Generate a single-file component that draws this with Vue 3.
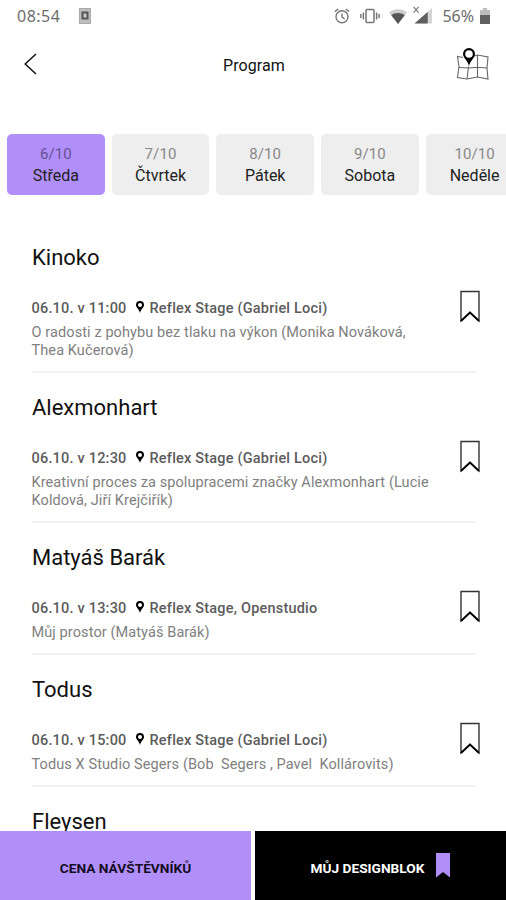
<template>
  <div class="screen">
    <div class="status-bar">
      <span class="time">08:54</span>
      <svg class="notif" width="12" height="16" viewBox="0 0 12 16">
        <rect x="0.5" y="0.5" width="11" height="15" fill="#bdbdbd" stroke="#aaa" />
        <rect x="3.5" y="4.5" width="5" height="6" fill="#ccc" stroke="#555" stroke-width="2" />
      </svg>
      <div class="status-right">
        <svg width="16" height="16" viewBox="0 0 16 16" fill="none" stroke="#777" stroke-width="1.4">
          <circle cx="8" cy="8.8" r="6" />
          <path d="M1 3.6 4.2 1M15 3.6 11.8 1M8 5.4V9l2.6 1.8" />
        </svg>
        <svg class="vibrate" width="20" height="16" viewBox="0 0 20 16" fill="none" stroke="#777" stroke-width="1.5">
          <rect x="6" y="1.5" width="8" height="13" rx="1" />
          <path d="M3.4 4.5v7M16.6 4.5v7M.9 6v4M19.1 6v4" />
        </svg>
        <svg class="wifi" width="18" height="15" viewBox="0 0 18 15">
          <path d="M0 3.5C5-.8 13-.8 18 3.5L9 15Z" fill="#ccc" />
          <path d="M2.3 6.2C6 3.3 12 3.3 15.7 6.2L9 15Z" fill="#555" />
        </svg>
        <svg class="signal" width="20" height="18" viewBox="0 0 20 18">
          <path d="M1.5 17.5 19 2v15.5Z" fill="#d5d5d5" />
          <path d="M1.5 17.5 14.7 6v11.5Z" fill="#606060" />
          <path d="M.6.8 5.6 6.6M5.6.8.6 6.6" stroke="#777" stroke-width="1.1" />
        </svg>
        <span class="percent">56%</span>
        <svg class="battery" width="10" height="16" viewBox="0 0 10 16">
          <path d="M0 2h3V0h4v2h3v5H0Z" fill="#bbb" />
          <path d="M0 7h10v9H0Z" fill="#606060" />
        </svg>
      </div>
    </div>

    <header class="header">
      <svg class="back" width="14" height="22" viewBox="0 0 14 22">
        <path d="M12 1 1.2 11 12 21" fill="none" stroke="#111" stroke-width="1.5" />
      </svg>
      <h1>Program</h1>
      <svg class="map" width="34" height="33" viewBox="0 0 34 33">
        <g fill="none" stroke="#666" stroke-width="1.1">
          <path d="M7 9.5 1.5 8.5l1.5 10-1.5 11 9.5 1.5 10.5-2 10.5 2-1-10.5 1-11.5L21.5 7l-4 1.2" />
          <path d="M21.5 7V29M12.5 18.5 11 31M3 19.5l9.5.5 9-.8 9.5.8" />
        </g>
        <path d="M13 0a6 6 0 0 0-6 6c0 3.6 4.6 6.5 6 12 1.4-5.5 6-8.4 6-12a6 6 0 0 0-6-6Z" fill="#000" />
        <circle cx="13" cy="6" r="3.8" fill="#fff" />
      </svg>
    </header>

    <nav class="days">
      <button v-for="(day, i) in days" :key="day.date" class="day" :class="{ active: i === activeDay }" @click="activeDay = i">
        <span class="day-date">{{ day.date }}</span>
        <span class="day-name">{{ day.name }}</span>
      </button>
    </nav>

    <main class="list">
      <article v-for="item in program" :key="item.title" class="item">
        <h2>{{ item.title }}</h2>
        <template v-if="item.when">
          <div class="meta">
            <span class="when">{{ item.when }}</span>
            <svg class="pin" width="8" height="12" viewBox="0 0 8 12">
              <path d="M4 0a4 4 0 0 0-4 4c0 2.5 3 4 4 8 1-4 4-5.5 4-8a4 4 0 0 0-4-4Z" fill="#000" />
              <circle cx="4" cy="4" r="2" fill="#fff" />
            </svg>
            <span>{{ item.place }}</span>
          </div>
          <p>
            <span v-for="line in item.text" :key="line">{{ line }}</span>
          </p>
          <svg class="bookmark" width="20" height="33" viewBox="0 0 20 33">
            <path d="M1 1.5H19V31L10 22.5 1 31Z" fill="none" stroke="#333" stroke-width="1.4" />
            <path d="M1 31 10 22.5 19 31" fill="none" stroke="#000" stroke-width="1.8" />
          </svg>
        </template>
      </article>
    </main>

    <footer class="footer">
      <button class="price">CENA NÁVŠTĚVNÍKŮ</button>
      <button class="mine">
        <span>MŮJ DESIGNBLOK</span>
        <svg width="14" height="25" viewBox="0 0 14 25">
          <path d="M0 0h14v24.5l-7-5.5-7 5.5Z" fill="#b18ffb" />
        </svg>
      </button>
    </footer>
  </div>
</template>

<script setup>
import { ref } from 'vue';

const activeDay = ref(0);

const days = [
  { date: '6/10', name: 'Středa' },
  { date: '7/10', name: 'Čtvrtek' },
  { date: '8/10', name: 'Pátek' },
  { date: '9/10', name: 'Sobota' },
  { date: '10/10', name: 'Neděle' }
];

const program = [
  {
    title: 'Kinoko',
    when: '06.10. v 11:00',
    place: 'Reflex Stage (Gabriel Loci)',
    text: ['O radosti z pohybu bez tlaku na výkon (Monika Nováková,', 'Thea Kučerová)']
  },
  {
    title: 'Alexmonhart',
    when: '06.10. v 12:30',
    place: 'Reflex Stage (Gabriel Loci)',
    text: ['Kreativní proces za spolupracemi značky Alexmonhart (Lucie', 'Koldová, Jiří Krejčiřík)']
  },
  {
    title: 'Matyáš Barák',
    when: '06.10. v 13:30',
    place: 'Reflex Stage, Openstudio',
    text: ['Můj prostor (Matyáš Barák)']
  },
  {
    title: 'Todus',
    when: '06.10. v 15:00',
    place: 'Reflex Stage (Gabriel Loci)',
    text: ['Todus X Studio Segers (Bob  Segers , Pavel  Kollárovits)']
  },
  { title: 'Fleysen' }
];
</script>

<style>
body {
  margin: 0;
  background: #fff;
}
</style>

<style scoped>
.screen {
  display: flex;
  flex-direction: column;
  height: 900px;
  overflow: hidden;
  background: #fff;
  color: #111;
  font-family: Roboto, 'Liberation Sans', sans-serif;
}
button {
  border: none;
  padding: 0;
  font-family: inherit;
}
h1,
h2,
p {
  margin: 0;
  font-weight: 400;
}
svg {
  flex: none;
}

/* Status bar */
.status-bar {
  display: flex;
  align-items: center;
  height: 32px;
  padding: 0 16px 0 17px;
  box-sizing: border-box;
  font-family: 'Noto Sans', sans-serif;
  font-size: 16px;
  color: #6c6c6c;
}
.time {
  letter-spacing: 0.5px;
}
.notif {
  margin: -1px 0 0 19px;
}
.status-right {
  display: flex;
  align-items: center;
  margin-left: auto;
}
.vibrate {
  margin-left: 10px;
}
.wifi {
  margin-left: 9px;
}
.signal {
  margin: -3px 0 0 6px;
}
.percent {
  margin-left: 9px;
}
.battery {
  margin-left: 6px;
}

/* Header */
.header {
  display: flex;
  align-items: center;
  justify-content: space-between;
  height: 66px;
  padding: 0 16px 0 24px;
}
.back {
  margin-bottom: 2px;
}
.map {
  margin-bottom: 1px;
}
.header h1 {
  margin-left: 14px;
  font-size: 16px;
  letter-spacing: 0.1px;
}

/* Days */
.days {
  display: flex;
  gap: 7px;
  margin: 36px 0 0 7px;
}
.day {
  display: flex;
  flex-direction: column;
  flex: none;
  align-items: center;
  width: 97.7px;
  height: 61px;
  padding-top: 10px;
  box-sizing: border-box;
  border-radius: 5px;
  background: #eee;
  font-size: 16px;
  line-height: 21px;
}
.day-date {
  color: #888;
  font-size: 15px;
  letter-spacing: 0.1px;
}
.day-name {
  color: #222;
}
.day.active {
  background: #b18ffb;
}
.active .day-date {
  color: #68518f;
}

/* Program list */
.list {
  flex: 1;
  min-height: 0;
  overflow: hidden;
  padding: 28px 30px 0 32px;
}
.item {
  position: relative;
  padding: 20px 0 11px;
  border-bottom: 2px solid #f1f1f1;
}
.item:last-child {
  border-bottom: none;
  padding-bottom: 0;
}
.item h2 {
  font-size: 22px;
  line-height: 30px;
}
.meta {
  display: flex;
  align-items: center;
  height: 20px;
  margin: 25px 0 0 -0.5px;
  color: #5c5c5c;
  font-size: 14.5px;
  font-weight: 500;
  letter-spacing: 0.2px;
}
.pin {
  margin: -2px 6px 0 9px;
}
.item p {
  margin: 6px 0 0 -0.5px;
  color: #808080;
  font-size: 14.5px;
  line-height: 18px;
  letter-spacing: 0.1px;
}
.item p span {
  display: block;
  white-space: pre;
}
.bookmark {
  position: absolute;
  top: 67px;
  right: -4px;
}

/* Footer */
.footer {
  display: grid;
  grid-template-columns: 1fr 1fr;
  gap: 4px;
  height: 69px;
}
.footer button {
  display: flex;
  align-items: center;
  justify-content: center;
  padding-top: 4px;
  font-size: 13.7px;
  font-weight: 700;
}
.price {
  background: #b18ffb;
  color: #150d22;
}
.mine {
  gap: 12px;
  background: #000;
  color: #fff;
}
.mine svg {
  margin-top: -5px;
}
</style>
